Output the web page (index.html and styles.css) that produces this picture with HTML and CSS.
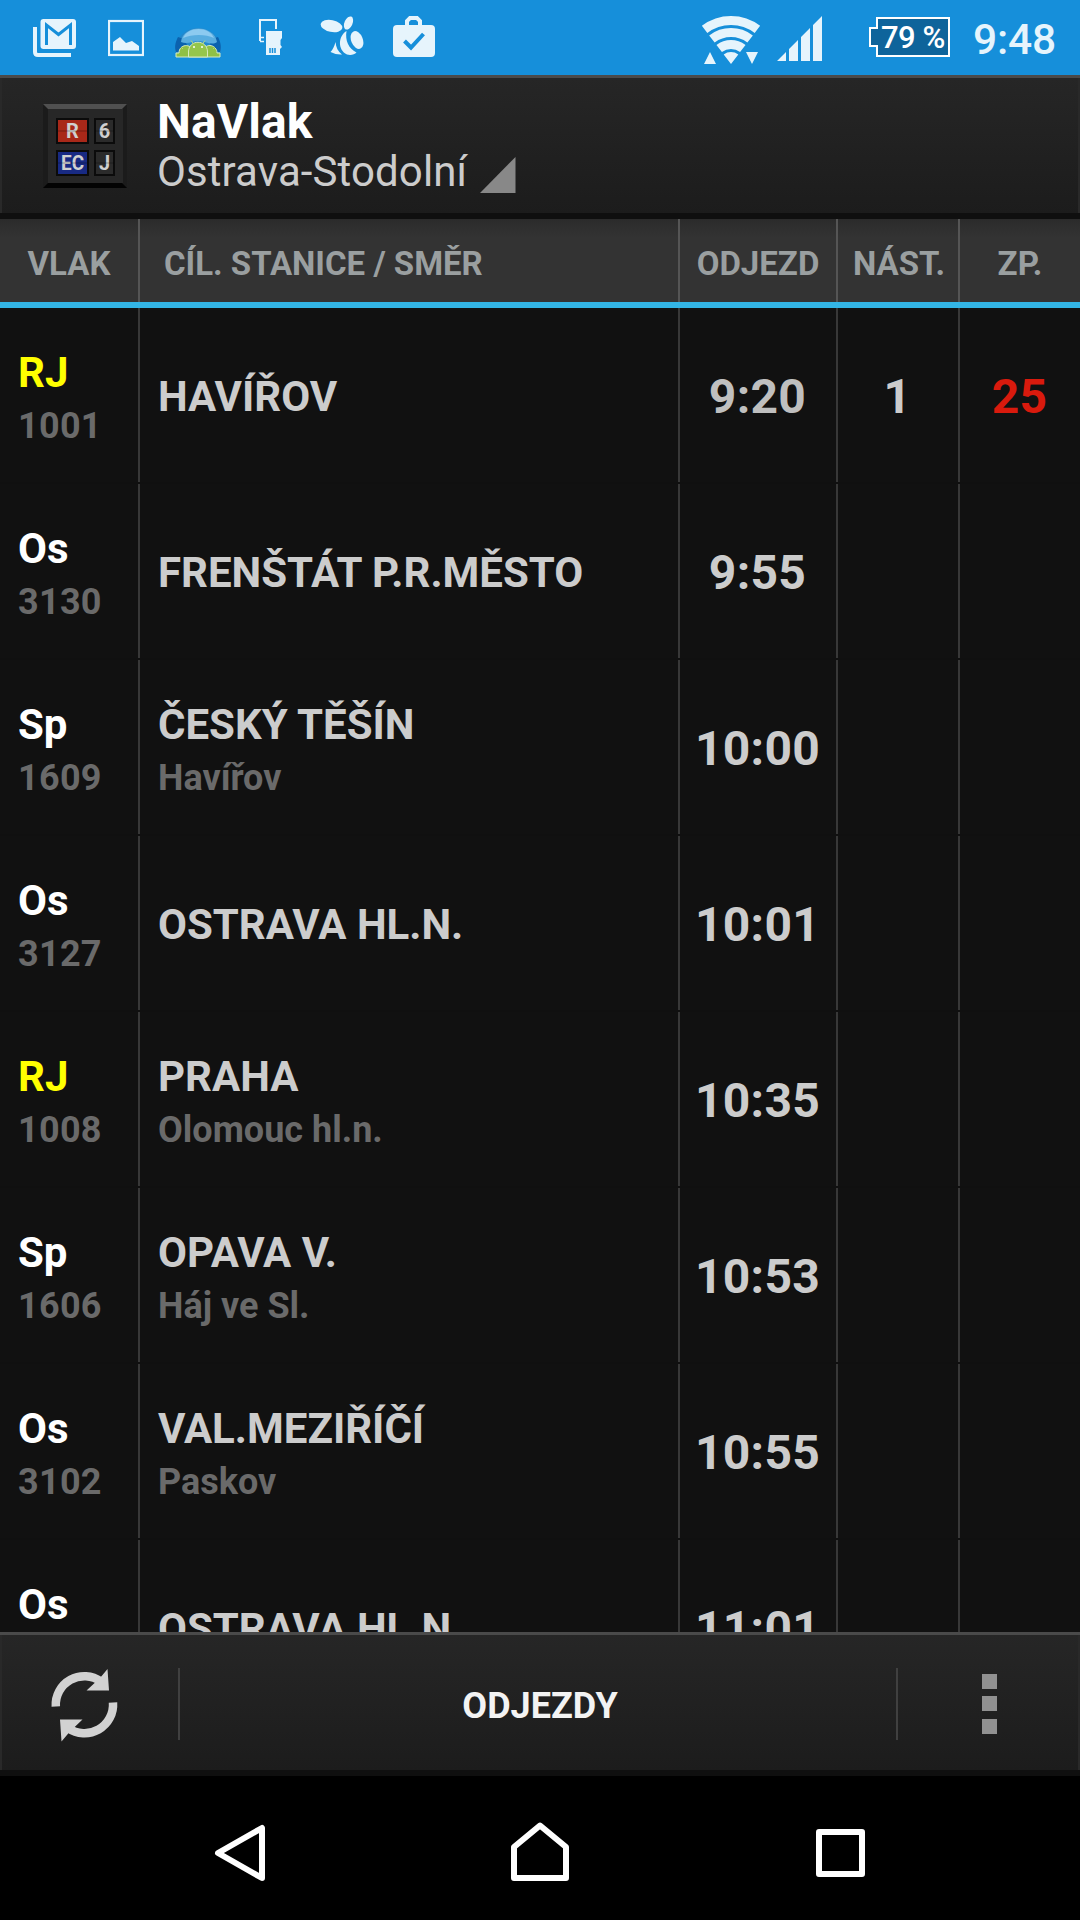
FILE: index.html
```html
<!DOCTYPE html>
<html lang="cs">
<head>
<meta charset="utf-8">
<title>NaVlak</title>
<link rel="stylesheet" href="styles.css">
</head>
<body>
<div class="screen">
  <div class="status">
    <svg class="s-mail" width="44" height="75" viewBox="33 0 44 75"><path d="M35 27v25q0 3 3 3h33" fill="none" stroke="#e6f4fc" stroke-width="4"/><rect x="40.500" y="19" width="35.500" height="30" rx="3" fill="#e6f4fc"/><path d="M46.500 45V25l12 9.500L70.500 25v20" fill="none" stroke="#168fda" stroke-width="3"/></svg>
    <svg class="s-image" width="36" height="75" viewBox="108 0 36 75"><rect x="109" y="21" width="34" height="34" fill="none" stroke="#e6f4fc" stroke-width="2.200"/><path d="M113 50.500V42l7-5 6 6 6-2 7 5v4.500z" fill="#e6f4fc"/></svg>
    <svg class="s-droid" width="48" height="75" viewBox="174 0 48 75">
      <path d="M176 56c-4-14 7-28 22-28s26 14 22 28z" fill="#2488cc"/><path d="M176 52c-2-6 0-11 2-15l6 2 3 6-5 7zM220 52c2-6 0-11-2-15l-6 2-2 5 5 8z" fill="#0b62ae"/><path d="M181 42c2-18 33-18 36 0-5 4-12-1-18-1s-12 4-18 1z" fill="#58ade0"/><path d="M183 38c5-12 26-12 31 0-8-4-22-4-31 0z" fill="#8ccaf0"/>
      <path d="M176 57v-4h3c0-9 12-10 14-2h10c3-9 14-6 14 2h3v4z" fill="#8fc045" stroke="#d7ebc0"/><path d="M188.500 57v-5c0-13 19-13 19 0v5z" fill="#95c64b" stroke="#d7ebc0"/><path d="M191 40.500l2.500 3.500m11.500-3.500l-2.500 3.500M181 47l2 2m32-2l-2 2" stroke="#b5d876"/><path d="M193 47h2m6 0h2" stroke="#fff" stroke-width="1.500"/></svg>
    <svg class="s-card" width="24" height="75" viewBox="259 0 24 75"><path d="M260 41V20h16v9" fill="none" stroke="#e6f4fc" stroke-width="2"/><path d="M260 37.500h4m-4 4h4" stroke="#e6f4fc" stroke-width="1.500"/><path d="M266 31h16v7l-1.500 2v5l1.500 2-2 2v6h-14z" fill="#e6f4fc"/><path d="M270 48v5m2.500-5v5m2.500-5v5" stroke="#168fda" stroke-width="1.500"/></svg>
    <svg class="s-bee" width="44" height="75" viewBox="320 0 44 75" fill="#e6f4fc"><ellipse cx="331.500" cy="26" rx="11" ry="6" transform="rotate(12 331.500 26)"/><ellipse cx="348.500" cy="23" rx="4" ry="7" transform="rotate(24 348.500 23)"/><path d="M346.500 31c-8.500 5-9 19 .5 23.500 4 1 7.500 0 9.500-2-8-4-11.500-12-10-21.500z"/><ellipse cx="357" cy="40" rx="5.800" ry="9.300" transform="rotate(-22 357 40)"/><path d="M335.500 42c-1 4-3 8-5 10q6 3 11.500 2.500c-4-3-6-7-6.500-12.500z"/></svg>
    <svg class="s-bag" width="42" height="75" viewBox="393 0 42 75"><path d="M407 26v-5l3-3h7l3 3v5" fill="none" stroke="#e6f4fc" stroke-width="4"/><rect x="393" y="25" width="42" height="32" rx="4" fill="#e6f4fc"/><path d="M404.500 41l6.500 6.500L423.500 34" fill="none" stroke="#168fda" stroke-width="4"/></svg>
    <svg class="s-wifi" width="60" height="75" viewBox="701 0 60 75"><g fill="none" stroke="#e6f4fc" stroke-width="9"><path d="M704.600 29.400A43.500 43.500 0 0 1 757.400 29.400"/><path d="M711.900 39A31.500 31.500 0 0 1 750.100 39"/><path d="M719.200 48.500A19.500 19.500 0 0 1 742.800 48.500"/></g><path d="M723.700 54.500A12 12 0 0 1 738.300 54.500L731 64zM704 64l6-12 6 12zM746 52h12l-6 12z" fill="#e6f4fc"/></svg>
    <svg class="s-signal" width="45" height="75" viewBox="777 0 45 75" fill="#e6f4fc"><path d="M777 61l9-9v9zM789 61V49l9-9v21zM801 61V37l9-9v33zM813 61V25l9-9v45z"/></svg>
    <div class="battery"><svg width="82" height="75" viewBox="869 0 82 75"><path d="M877 18h72v38h-72V46h-7V28h7z" fill="#0e649b" stroke="#fff" stroke-width="2"/></svg><span class="pct">79 %</span></div>
    <span class="clock">9:48</span>
  </div>

  <div class="actionbar">
    <svg class="logo" width="84" height="144" viewBox="43 75 84 144">
      <rect x="43" y="104" width="84" height="84" fill="#1b1b1b"/><path d="M43 104h84l-5 5H48z" fill="#505050"/><path d="M43 188h84l-5-5H48z" fill="#030303"/><rect x="48" y="109" width="75" height="74" fill="#272727"/>
      <g stroke="#0b0b0b" stroke-width="2"><rect x="57" y="119" width="31" height="24" fill="#a82819"/><rect x="95" y="119" width="19" height="24" fill="#2b2b2b"/><rect x="57" y="151" width="31" height="24" fill="#182a83"/><rect x="95" y="151" width="19" height="24" fill="#2b2b2b"/></g>
      <g class="tile-text"><text x="72.500" y="138">R</text><text x="104.500" y="138">6</text><text x="72.500" y="169.500" textLength="23" lengthAdjust="spacingAndGlyphs">EC</text><text x="104.500" y="169.500">J</text></g>
      <path d="M58 131h29m8 0h19M58 163h29m8 0h19" stroke="#000" stroke-opacity=".3"/>
    </svg>
    <div class="titles"><div class="title">NaVlak</div><div class="station">Ostrava-Stodolní</div></div>
    <svg class="spinner" width="36" height="36" viewBox="0 0 36 36"><path d="M35.500 0v36H0z" fill="#888"/></svg>
  </div>

  <div class="grid head"><div>VLAK</div><div class="h-dest">CÍL. STANICE / SMĚR</div><div>ODJEZD</div><div class="h-platform">NÁST.</div><div>ZP.</div></div>

  <div class="list">
    <div class="grid row"><div class="train"><b class="rj">RJ</b><i>1001</i></div><div class="dest"><b>HAVÍŘOV</b></div><div class="time first">9:20</div><div class="time">1</div><div class="time late">25</div></div>
    <div class="grid row"><div class="train"><b>Os</b><i>3130</i></div><div class="dest"><b>FRENŠTÁT P.R.MĚSTO</b></div><div class="time">9:55</div><div></div><div></div></div>
    <div class="grid row"><div class="train"><b>Sp</b><i>1609</i></div><div class="dest via"><b>ČESKÝ TĚŠÍN</b><i>Havířov</i></div><div class="time">10:00</div><div></div><div></div></div>
    <div class="grid row"><div class="train"><b>Os</b><i>3127</i></div><div class="dest"><b>OSTRAVA HL.N.</b></div><div class="time">10:01</div><div></div><div></div></div>
    <div class="grid row"><div class="train"><b class="rj">RJ</b><i>1008</i></div><div class="dest via"><b>PRAHA</b><i>Olomouc hl.n.</i></div><div class="time">10:35</div><div></div><div></div></div>
    <div class="grid row"><div class="train"><b>Sp</b><i>1606</i></div><div class="dest via"><b>OPAVA V.</b><i>Háj ve Sl.</i></div><div class="time">10:53</div><div></div><div></div></div>
    <div class="grid row"><div class="train"><b>Os</b><i>3102</i></div><div class="dest via"><b>VAL.MEZIŘÍČÍ</b><i>Paskov</i></div><div class="time">10:55</div><div></div><div></div></div>
    <div class="grid row"><div class="train"><b>Os</b></div><div class="dest"><b>OSTRAVA HL.N.</b></div><div class="time">11:01</div><div></div><div></div></div>
  </div>

  <div class="bottombar">
    <div class="refresh"><svg width="70" height="76" viewBox="50 1667 70 76"><g fill="none" stroke="#d2d2d2" stroke-width="8.500"><path d="M55.800 1706.500A28.600 28.600 0 0 1 101 1681.500"/><path d="M113 1702.500A28.600 28.600 0 0 1 68 1728"/></g><path d="M107.500 1669l1.500 21.500H86.500l13.500-12.500zM61.500 1741.500L60 1719.500h22.500L69.500 1732z" fill="#d2d2d2"/></svg></div>
    <div class="mode">ODJEZDY</div>
    <div class="more"><svg width="15" height="60" viewBox="0 0 15 60" fill="#919191"><path d="M0 0h15v15H0zM0 22h15v15H0zM0 45h15v15H0z"/></svg></div>
  </div>

  <div class="nav">
    <svg width="52" height="60" viewBox="214 1823 52 60"><path d="M262 1828v50l-44-25z" /></svg>
    <svg width="60" height="60" viewBox="510 1822 60 60"><path d="M514 1878v-31l26-21.500 26 21.500v31z"/></svg>
    <svg width="50" height="50" viewBox="816 1828 50 50"><path d="M819 1832h43v42h-43z"/></svg>
  </div>
</div>
</body>
</html>
```
FILE: styles.css
```css
* { box-sizing: border-box; }
body { margin: 0; background: #000; font-family: Roboto, "Noto Sans", sans-serif; }
svg { display: block; flex: none; }
b { font-weight: 700; }
i { font-style: normal; }
.screen { width: 1080px; height: 1920px; display: flex; flex-direction: column; overflow: hidden; background: #111; }

.status { height: 75px; flex: none; display: flex; background: #168fda; padding-left: 33px; }
.s-image { margin-left: 31px; }
.s-droid { margin-left: 30px; }
.s-card { margin-left: 37px; }
.s-bee { margin-left: 37px; }
.s-bag { margin-left: 29px; }
.s-wifi { margin-left: 266px; }
.s-signal { margin-left: 16px; }
.battery { display: grid; margin-left: 47px; }
.battery > * { grid-area: 1 / 1; }
.pct { font-size: 31px; line-height: 75px; padding-left: 12px; font-weight: 500; letter-spacing: -0.5px; color: #fff; white-space: nowrap; }
.clock { margin-left: 22px; font-size: 42.5px; line-height: 79px; font-weight: 500; letter-spacing: -0.2px; color: #e6f4fc; }

.actionbar, .bottombar {
  height: 144px; flex: none; display: flex;
  border-top: 3px solid #4a4a4a; border-bottom: 6px solid #0f0f0f;
  background: linear-gradient(#262626, #1c1c1c);
  box-shadow: inset 2px 0 #292929, inset -2px 0 #292929;
}
.actionbar { padding-left: 43px; }
.logo { margin-top: -3px; }
.tile-text { font: 700 20px Roboto, sans-serif; fill: #d0d0d0; text-anchor: middle; }
.titles { margin: 17px 0 0 30px; white-space: nowrap; }
.title { font-size: 48px; line-height: 54px; font-weight: 700; letter-spacing: 0.1px; color: #fff; }
.station { font-size: 42px; line-height: 46px; letter-spacing: 0.1px; color: #ccc; }
.spinner { margin: 79px 0 0 13px; }

.grid { display: grid; grid-template-columns: 140px 540px 158px 122px 120px; }
.grid > div { border-right: 2px solid #383838; }
.grid > div:last-child { border-right: 0; }
.head { height: 89px; flex: none; border-bottom: 6px solid #33b5e5; background: linear-gradient(#2b2b2b, #333 22%); font-size: 33px; line-height: 89px; font-weight: 700; color: #9a9fa0; text-align: center; white-space: nowrap; }
.head > div { height: 83px; border-color: #555; }
.head .h-dest { text-align: left; padding-left: 24px; }
.head .h-platform { padding-left: 2px; }

.list { height: 1324px; flex: none; overflow: hidden; }
.row { height: 176px; grid-template-rows: 174px; border-bottom: 2px solid #101010; }
.train { padding: 41px 0 0 18px; display: flex; flex-direction: column; }
.train b, .dest b { font-size: 42px; line-height: 48px; }
.train i, .dest i { font-size: 36px; line-height: 59px; font-weight: 700; color: #6a6a6a; }
.train i { letter-spacing: 0.3px; }
.train b { color: #fff; }
.train .rj { color: #ff0; }
.dest { display: flex; flex-direction: column; justify-content: center; padding: 4px 0 0 18px; color: #ccc; white-space: nowrap; }
.via { justify-content: flex-start; padding-top: 41px; }
.time { font-size: 48px; line-height: 178px; font-weight: 700; letter-spacing: 0.3px; padding-right: 1px; color: #ccc; text-align: center; }
.first { color: #bfbfbf; }
.late { color: #d91a0d; }

.refresh { width: 180px; padding: 32px 0 0 50px; }
.mode { flex: none; width: 720px; height: 72px; margin: 33px 0 0 -2px; padding-left: 4px; border: solid #404040; border-width: 0 2px; line-height: 76px; text-align: center; font-size: 36px; font-weight: 700; color: #f3f3f3; }
.more { padding: 39px 0 0 84px; }

.nav { height: 144px; flex: none; background: #000; display: flex; align-items: flex-start; padding: 47px 0 0 214px; }
.nav svg { fill: none; stroke: #fff; stroke-width: 6; stroke-linejoin: round; }
.nav svg:nth-child(2) { margin: -1px 0 0 244px; }
.nav svg:nth-child(3) { margin: 5px 0 0 246px; }
```
